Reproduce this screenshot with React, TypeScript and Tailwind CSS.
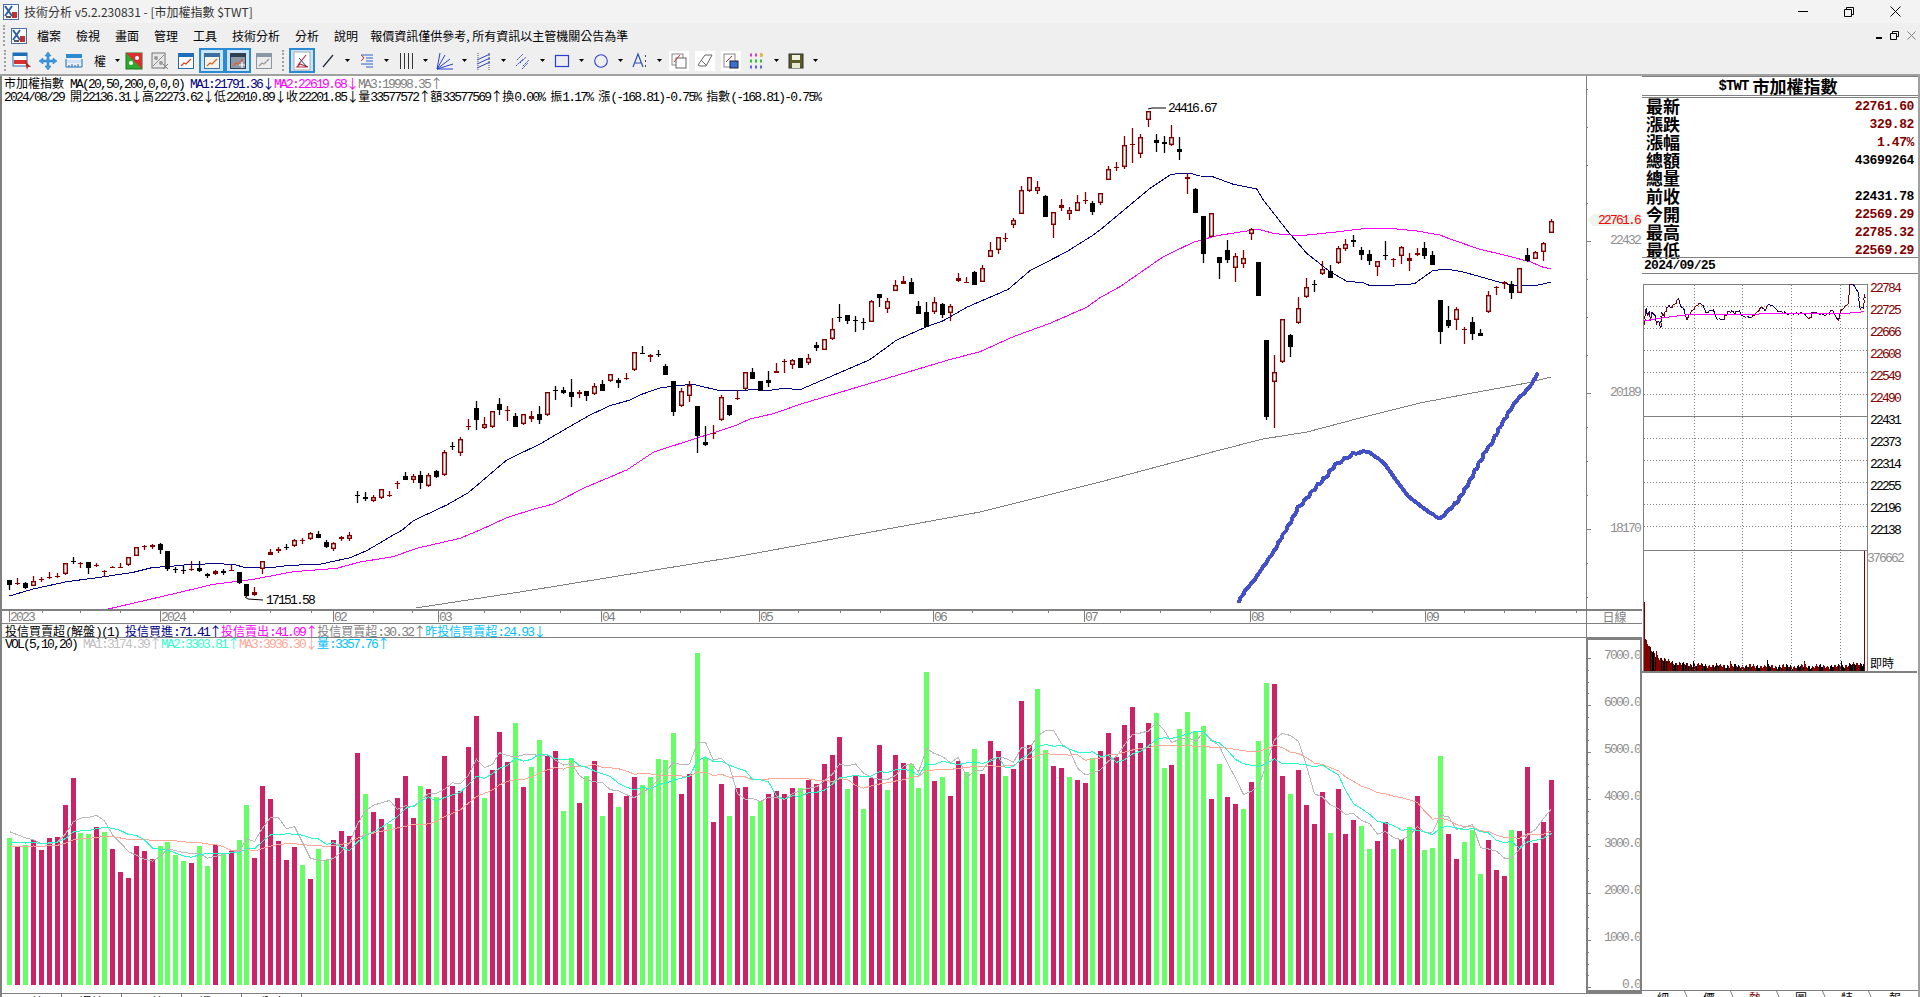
import React from "react";

const mono = "font-['Liberation_Mono','Noto_Sans_CJK_TC',monospace]";
const cjk = "font-['Noto_Sans_CJK_TC','Liberation_Sans',sans-serif]";
const num = "font-['Liberation_Mono','Noto_Sans_CJK_TC',monospace] text-[13px] tracking-[-1.8px]";

function Mix({ t, className = "" }: { t: string; className?: string }) {
  const parts = t.split(/([\u2E80-\u9FFF\uF900-\uFFEF]+|[↑↓])/).filter(Boolean);
  return (
    <span className={className}>
      {parts.map((p, i) =>
        p === "↑" || p === "↓" ? (
          <span key={i} className={`${cjk} inline-block w-[12px] text-center text-[13px] leading-[13px]`}>{p}</span>
        ) : /[\u2E80-\u9FFF\uF900-\uFFEF]/.test(p) ? (
          <span key={i} className={`${cjk} inline-block leading-[13px]`}>{p}</span>
        ) : (
          <span key={i} className={`${num} inline-block leading-[13px] whitespace-pre`}>{p}</span>
        )
      )}
    </span>
  );
}

type C = number[];
const segA: C[] = [[0,420,420,435,450],[1,414,430,432,436],[0,425,429,443,447],[1,408,423,437,437],[1,410,417,419,425],[1,397,410,412,418],[1,400,407,409,414],[1,368,370,403,404],[0,351,362,364,372],[1,365,370,372,383],[0,366,367,384,402],[1,370,375,377,382],[1,391,393,395,411],[1,378,381,383,385],[1,370,381,383,383],[1,352,352,376,378],[1,322,322,347,348],[1,316,318,320,331],[1,313,316,322,326],[0,310,312,329,342],[0,334,334,388,394],[0,380,388,390,399],[0,376,389,393,401],[1,364,387,391,392],[0,364,384,393,396],[0,400,403,407,413],[1,389,394,403,404],[0,388,393,399,406],[1,374,389,391,392],[0,396,396,428,433],[0,431,432,467,470],[1,442,457,466,467],[1,364,364,388,402],[1,327,337,345,346],[1,322,326,334,338],[0,313,321,323,331],[1,298,301,319,320],[1,294,301,303,312],[1,277,278,298,299],[0,273,283,293,293],[0,301,306,321,323],[1,307,308,327,333],[1,288,290,298,302],[1,277,284,296,303]];
const segB: C[] = [[0,513,526,529,548],[0,516,531,536,544],[1,525,532,544,545],[1,507,508,535,536],[1,513,524,527,530],[1,483,490,493,507],[0,456,468,479,480],[1,463,469,480,488],[0,453,465,488,507],[1,458,466,499,500],[0,450,453,470,473],[1,391,397,466,467],[0,365,377,380,390],[1,351,358,400,407],[1,297,318,321,329],[0,243,265,299,330],[1,292,313,323,326],[1,273,274,322,323],[0,234,252,269,285],[1,258,269,272,303],[0,280,289,320,320],[1,283,283,313,314],[1,273,287,296,305],[0,259,283,299,312],[1,216,217,286,287],[0,197,210,213,240],[0,201,210,218,221],[0,177,216,230,261],[1,209,217,223,233],[0,213,214,227,242],[1,190,199,223,224],[0,180,193,212,213],[1,163,163,184,185],[0,175,180,188,204],[1,158,175,177,180],[1,95,97,151,152],[0,78,99,101,101],[1,102,106,112,125],[0,90,102,106,112],[0,132,139,164,165],[0,183,183,275,288],[1,205,214,259,260],[1,183,195,229,245],[0,258,258,349,399],[0,318,366,374,378],[1,315,338,343,357],[1,226,232,301,302],[0,255,255,284,288],[1,210,234,237,239],[1,156,157,208,210],[0,144,156,176,177],[0,183,183,212,212],[0,153,180,188,200],[1,128,154,158,158],[1,116,124,127,158],[1,117,119,134,146],[0,115,115,143,144]];
const segC: C[] = [[1,762,775,790,795],[0,725,736,743,752],[1,716,718,749,751],[1,655,688,718,719],[0,612,651,654,666],[0,645,646,662,672],[0,648,659,661,696],[0,654,665,667,690],[1,601,604,665,666],[0,582,582,593,621],[1,595,604,626,639],[1,541,556,572,573],[1,529,544,551,551],[0,534,546,582,582],[0,603,618,642,642],[0,606,636,680,680],[1,591,606,636,642],[0,610,613,645,654],[1,613,619,638,663],[1,519,535,542,545],[1,531,545,548,548],[0,514,516,555,555],[1,495,504,545,545],[1,426,451,470,470],[1,411,412,449,462],[1,400,415,418,425],[1,354,360,374,384],[1,259,271,341,341],[1,231,232,272,275],[1,243,262,272,282],[0,286,288,351,351],[1,337,337,374,414],[1,297,316,323,333],[1,320,331,341,360],[1,285,307,332,332],[1,276,300,303,312],[0,303,309,335,345],[1,280,280,308,315],[1,197,208,239,239],[1,186,201,204,213],[1,108,136,200,208],[1,84,132,134,189],[1,102,112,161,174],[1,33,34,61,81],[0,101,121,128,156],[0,108,126,133,159],[1,75,112,134,137]];
const segD: C[] = [[0,141,178,185,209],[1,250,262,266,312],[0,295,297,368,369],[0,378,378,491,518],[1,370,370,440,441],[0,502,502,518,566],[0,450,480,510,518],[1,490,499,535,575],[1,480,505,523,533],[1,415,416,433,450],[0,516,516,618,618],[0,750,750,980,990],[1,795,847,877,1013],[1,686,688,817,818],[0,733,735,770,800],[1,622,653,700,701],[1,565,592,622,623],[0,571,582,584,606],[1,514,538,553,554],[0,525,544,563,564],[1,469,475,520,521],[1,447,463,476,482],[0,435,450,457,471],[0,472,480,494,510],[0,480,492,512,524],[1,514,514,531,557],[0,453,495,497,509],[1,505,507,509,530],[1,469,470,499,522],[1,489,505,514,542],[1,475,489,496,497],[0,456,475,497,507],[0,484,496,524,524],[0,630,630,725,761],[0,648,690,707,713],[1,652,658,691,720],[1,712,716,718,761],[0,682,696,732,749],[0,717,729,737,737],[1,603,616,667,668],[1,587,591,593,614],[1,574,575,583,597],[0,574,582,608,626],[1,534,535,608,610],[0,474,496,512,515],[1,484,487,508,508],[1,457,458,487,513],[1,388,392,428,428]];

const conv = (s: C[], oy: number) => s.map((r) => [r[0], oy + r[1] / 3, oy + r[2] / 3, oy + r[3] / 3, oy + r[4] / 3]);
const candles = [...conv(segA, 440), ...conv(segB, 320), ...conv(segC, 100), ...conv(segD, 90)];
const cx = (i: number) => Math.round(9.3 + 7.906 * i);

const pts = (ox: number, oy: number, a: number[][]) => a.map(([x, y]) => [ox + x / 3, oy + y / 3]);
const toS = (a: number[][]) => a.map((p) => `${p[0].toFixed(1)},${p[1].toFixed(1)}`).join(" ");

const densify = (a: number[][], step: number, amp: number) => {
  const out: number[][] = [];
  let n = 0;
  for (let i = 0; i < a.length - 1; i++) {
    const [x0, y0] = a[i];
    const [x1, y1] = a[i + 1];
    const len = Math.hypot(x1 - x0, y1 - y0);
    const k = Math.max(1, Math.round(len / step));
    for (let j = 0; j < k; j++) {
      const t = j / k;
      n++;
      const w = amp * (Math.sin(n * 1.9) + 0.6 * Math.sin(n * 4.3 + 1));
      out.push([x0 + (x1 - x0) * t + w * 0.6, y0 + (y1 - y0) * t + w]);
    }
  }
  out.push(a[a.length - 1]);
  return out;
};

const navy = toS([
  ...pts(0, 440, [[28,468],[100,447],[200,425],[300,412],[400,397],[460,382],[500,380],[560,374],[640,371],[700,373],[740,384],[820,382],[870,376],[960,373],[1050,353],[1100,332],[1180,285]]),
  ...pts(340, 320, [[187,630],[220,602],[320,555],[385,518],[430,480],[500,420],[600,372],[680,325],[750,285],[810,257],[870,240],[905,223],[960,204],[1000,198],[1060,193],[1130,210],[1190,212],[1240,209],[1290,211],[1330,205],[1380,209]]),
  ...pts(780, 100, [[268,780],[350,720],[440,680],[490,662],[560,622],[685,568],[750,512],[860,455],[940,405]]),
  ...pts(1100, 90, [[0,420],[60,370],[150,295],[210,255],[240,249],[270,250],[300,258],[335,259],[400,283],[470,297],[490,330],[560,420],[620,490],[690,545],[740,574],[790,578],[810,587],[920,584],[945,580],[1000,541],[1045,538],[1090,546],[1200,577],[1240,586],[1310,586],[1352,577]]),
]);
const magenta = toS([
  ...pts(0, 440, [[325,507],[450,478],[560,452],[640,433],[760,418],[880,395],[1010,385],[1080,366],[1180,350],[1250,325],[1380,295]]),
  ...pts(340, 320, [[420,630],[500,593],[580,568],[640,552],[730,505],[860,450],[940,397],[1000,377],[1100,345],[1190,315],[1230,297],[1300,281],[1380,253]]),
  ...pts(780, 100, [[505,780],[600,755],[700,710],[810,670],[920,622]]),
  ...pts(1100, 90, [[0,623],[60,590],[190,500],[280,457],[350,437],[440,423],[475,418],[525,431],[600,437],[700,427],[800,415],[870,415],[950,423],[1020,435],[1050,447],[1140,478],[1200,492],[1290,515],[1330,532],[1352,536]]),
]);
const grayLine = toS([[416,608],[520,592],[735,557],[980,512],[1100,482],[1220,450],[1263,439],[1307,432],[1360,418],[1420,403],[1467,394],[1527,383],[1551,377]]);
const blueCurve = toS(densify([[1239,601],[1245,591],[1250,585],[1255,579],[1261,570],[1270,557],[1276,548],[1280,540],[1289,525],[1298,508],[1307,498],[1316,487],[1326,477],[1335,465],[1345,459],[1353,454],[1367,451],[1376,457],[1384,463],[1396,480],[1408,496],[1417,503],[1426,510],[1440,519],[1449,510],[1457,502],[1466,488],[1475,471],[1482,458],[1486,450],[1490,446],[1495,437],[1500,427],[1506,417],[1512,407],[1517,400],[1522,395],[1528,389],[1533,382],[1537,374]], 3, 0.6));

type B = [number, number];
const vol1: B[] = [[0,594],[1,618],[0,615],[1,600],[1,630],[1,594],[1,591],[1,495],[1,414],[0,579],[0,582],[1,561],[0,576],[1,627],[1,696],[1,714],[1,618],[1,633],[1,657],[0,618],[0,606],[0,645],[0,663],[1,669],[0,618],[0,678],[1,615],[0,642],[1,633],[0,600],[0,495],[1,654],[1,438],[1,477],[1,603],[1,660],[1,621],[0,675],[1,717],[0,627],[0,660],[1,600],[1,573],[1,588],[1,339],[0,462],[1,516],[1,537],[0,552],[1,474],[1,408],[1,534],[0,438],[1,447],[0,471],[1,348],[1,438],[1,453],[1,321],[1,228],[0,474],[1,390],[1,276],[1,366],[0,249],[1,441],[0,381],[0,300],[1,348],[1,333],[0,513],[0,354],[1,489],[0,408],[1,363],[0,528],[1,459],[0,501],[1,468],[1,411],[0,435],[0,411],[0,357],[0,360],[0,279],[1,462],[1,402],[0,39],[0,354],[1,546],[1,432],[0,528],[1,444],[1,441],[0,528],[0,483],[1,462],[1,453]];
const vol2: B[] = [[1,462],[1,444],[0,444],[1,420],[1,432],[1,372],[1,345],[1,291],[0,447],[1,405],[0,507],[1,415],[1,315],[0,450],[1,345],[1,369],[0,372],[0,444],[0,96],[1,423],[0,411],[1,468],[1,363],[0,396],[0,327],[1,402],[1,303],[1,333],[0,408],[1,387],[1,183],[1,315],[0,147],[0,330],[1,378],[1,384],[0,411],[1,420],[1,429],[0,354],[1,333],[1,279],[1,351],[1,255],[1,201],[1,309],[1,249],[0,219],[0,384],[1,375],[0,267],[0,216],[0,273],[0,258],[1,477],[0,372],[1,471],[1,492],[0,507],[1,426],[0,303],[0,129],[1,132],[1,408],[0,462],[1,390],[1,495],[1,552],[1,456],[0,579],[1,447],[1,582],[1,540],[0,558],[0,627],[1,603],[1,546],[0,627],[1,597],[0,561],[1,468],[0,630],[0,624],[0,348],[1,582],[1,657],[0,606],[0,570],[0,702],[1,600],[1,690],[1,708],[0,570],[1,573],[1,381],[1,609],[1,546],[1,420]];
const vols = [...vol1, ...vol2].map(([k, z]) => [k, 640 + z / 3]);

const ma = (n: number, pad: number) => {
  const ys = vols.map((v) => v[1]);
  return toS(
    ys.map((_, i) => {
      let sum = 0;
      for (let j = i - n + 1; j <= i; j++) sum += j >= 0 ? ys[j] : pad;
      return [cx(i) + 0.5, sum / n];
    })
  );
};

const intraRaw = [[253,160],[258,110],[262,135],[268,120],[272,150],[276,125],[285,130],[290,160],[296,150],[302,172],[306,125],[312,135],[320,115],[325,103],[332,110],[345,100],[355,80],[362,105],[372,115],[380,148],[388,130],[398,118],[410,103],[420,97],[430,105],[438,125],[450,120],[460,115],[472,148],[482,142],[490,148],[500,128],[515,118],[525,128],[538,118],[545,135],[560,138],[575,140],[590,125],[605,108],[615,118],[625,100],[640,105],[655,122],[670,122],[680,128],[700,128],[730,127],[748,145],[760,122],[780,130],[800,132],[818,118],[835,150],[842,120],[865,97],[870,40],[880,40],[895,65],[900,115],[910,110],[915,68]];
const intra = densify(intraRaw.map(([x, y]) => [1560 + x / 3, 270 + y / 3]), 1.6, 0.7);
const avg = toS(pts(1560, 270, [[253,150],[280,145],[300,142],[350,135],[400,130],[500,130],[700,128],[850,128],[912,122]]));

const majorDates: [number, string][] = [[9,"2023"],[160,"2024"],[333,"02"],[438,"03"],[601,"04"],[759,"05"],[933,"06"],[1084,"07"],[1250,"08"],[1425,"09"]];
const minorDates = [42,80,120,193,230,270,311,373,412,484,520,560,640,680,720,798,840,880,972,1012,1048,1120,1160,1210,1290,1330,1372,1464,1504,1535,1576];

function Tb({ children, sel = false }: { children?: React.ReactNode; sel?: boolean }) {
  return (
    <div className={`w-[26px] h-[25px] shrink-0 flex items-center justify-center ${sel ? "bg-[#cce4f7] border-2 border-[#2a8ad4]" : ""}`}>
      {children}
    </div>
  );
}
function Dd() {
  return (
    <div className="w-[13px] h-[25px] shrink-0 flex items-center justify-center">
      <svg width="5" height="3" viewBox="0 0 5 3"><path d="M0 0h5L2.5 3z" fill="#000" /></svg>
    </div>
  );
}
function Grip({ w = "w-[12px]" }: { w?: string }) {
  return (
    <div className={`${w} h-[25px] shrink-0 flex justify-center items-center`}>
      <div className="w-px h-[21px] border-l-2 border-dotted border-[#a0a0a0]" />
    </div>
  );
}
const Win = ({ c = "#1f6fb8", line = "#d8402a", bg = "#fff", plus = false }: { c?: string; line?: string; bg?: string; plus?: boolean }) => (
  <svg width="18" height="18" viewBox="0 0 18 18">
    <rect x="1.5" y="1.5" width="15" height="15" fill={bg} stroke={c} />
    <rect x="2" y="2" width="14" height="3" fill={c} />
    <path d="M4 14l3-3 2 1 5-5" stroke={line} fill="none" strokeWidth="1.3" />
    {plus && <path d="M10 13h6M13 10v6" stroke="#fff" strokeWidth="1.2" />}
  </svg>
);
const Logo = () => (
  <svg width="16" height="16" viewBox="0 0 16 16">
    <rect x="0.5" y="0.5" width="15" height="15" fill="#fff" stroke="#4a6fa0" />
    <path d="M2 2l7 10M9 2L2 12" stroke="#2a5fb0" strokeWidth="2" />
    <path d="M9 8h5v6H9z" fill="#c03030" />
    <path d="M3 13h5" stroke="#222" strokeWidth="1.5" />
  </svg>
);

function Toolbar() {
  return (
    <div className="h-[27px] flex items-center pl-[1px] bg-[#efeff0] -mt-[1px]">
      <Grip w="w-[8px]" />
      <Tb>
        <svg width="20" height="20" viewBox="0 0 20 20"><rect x="1" y="2" width="14" height="13" fill="#fff" stroke="#1f6fb8" /><rect x="1" y="2" width="14" height="3" fill="#1f6fb8" /><rect x="2" y="9" width="13" height="4" fill="#d83030" /><path d="M13 10l6 6-3 0-1 3z" fill="#c02020" /></svg>
      </Tb>
      <Tb>
        <svg width="20" height="20" viewBox="0 0 20 20"><path d="M10 1l3 4h-2v4h4V7l4 3-4 3v-2h-4v4h2l-3 4-3-4h2v-4H5v2l-4-3 4-3v2h4V5H7z" fill="#3a9be0" stroke="#1f6fb8" strokeWidth=".5" /></svg>
      </Tb>
      <Tb>
        <svg width="18" height="18" viewBox="0 0 18 18"><rect x="1" y="2" width="16" height="4" fill="#2a8ad4" /><rect x="1" y="8" width="16" height="3" fill="#cfe5f7" /><path d="M1 7v8h16V7M4 13v2M7 12v3M10 13v2M13 12v3" stroke="#1f6fb8" fill="none" /></svg>
      </Tb>
      <Tb><span className={`${cjk} text-[12px] text-black`}>權</span></Tb>
      <div className="w-[8px] h-[25px] shrink-0 flex items-center justify-center"><svg width="5" height="3" viewBox="0 0 5 3"><path d="M0 0h5L2.5 3z" fill="#000" /></svg></div>
      <Tb>
        <svg width="18" height="18" viewBox="0 0 18 18"><rect x="1" y="1" width="16" height="16" fill="#2fa82f" stroke="#1b7a1b" /><path d="M1 1l16 16V1z" fill="#d83030" /><circle cx="6" cy="11" r="2" fill="#fff" /><circle cx="12" cy="6" r="2" fill="#fff" /></svg>
      </Tb>
      <Tb>
        <svg width="18" height="18" viewBox="0 0 18 18"><rect x="1" y="1" width="13" height="15" fill="#e8e8e8" stroke="#777" /><path d="M2 14L13 3" stroke="#888" /><circle cx="5" cy="6" r="2" fill="#999" /><circle cx="10" cy="11" r="2" fill="#999" /><path d="M12 12l5 5M17 12l-5 5" stroke="#777" /></svg>
      </Tb>
      <Tb><Win /></Tb>
      <Tb sel><Win c="#3a6f9f" line="#e06030" bg="#f4f4e8" /></Tb>
      <Tb sel><Win c="#304050" line="#e06030" bg="#8a98a8" plus /></Tb>
      <Tb><Win c="#8a97a5" line="#999" bg="#ececec" /></Tb>
      <Grip />
      <Tb sel>
        <svg width="18" height="20" viewBox="0 0 18 20"><rect x="1" y="1" width="16" height="18" fill="#fff" stroke="#aaa" /><path d="M5 14L13 4M4 16l3-3 8 3z" fill="none" stroke="#b03040" strokeWidth="1.2" /><path d="M6 7l8 9" stroke="#304080" /></svg>
      </Tb>
      <Tb><svg width="16" height="16" viewBox="0 0 16 16"><path d="M3 14L13 2" stroke="#202840" strokeWidth="1.2" /></svg></Tb><Dd />
      <Tb><svg width="18" height="18" viewBox="0 0 18 18"><path d="M3 3h12M8 6h7M8 9h7M3 12h12M8 15h7" stroke="#2a5fd0" /><path d="M3 3l3 3-3 3" stroke="#d03030" fill="none" /></svg></Tb><Dd />
      <Tb><svg width="16" height="18" viewBox="0 0 16 18"><path d="M2.5 1v16M6.5 1v16M10.5 1v16M14.5 1v16" stroke="#333" /></svg></Tb><Dd />
      <Tb><svg width="18" height="18" viewBox="0 0 18 18"><path d="M1 17L4 1M1 17L9 3M1 17L14 7M1 17L17 12M1 17h16" stroke="#2a40d0" fill="none" /></svg></Tb><Dd />
      <Tb><svg width="18" height="18" viewBox="0 0 18 18"><path d="M2 8L15 2M2 12l13-6M2 16l13-6" stroke="#2a40d0" fill="none" /><path d="M3 1v17M14 1v17" stroke="#555" strokeDasharray="1 1" /></svg></Tb><Dd />
      <Tb><svg width="18" height="18" viewBox="0 0 18 18"><path d="M3 8l6-6M6 11l6-6M2 14l7-7M9 14l6-6M8 17l6-6" stroke="#2a40d0" fill="none" strokeDasharray="2 1" /></svg></Tb><Dd />
      <Tb><svg width="16" height="16" viewBox="0 0 16 16"><rect x="1.5" y="2.5" width="13" height="11" fill="none" stroke="#2a40d0" strokeWidth="1.2" /></svg></Tb><Dd />
      <Tb><svg width="16" height="16" viewBox="0 0 16 16"><circle cx="8" cy="8" r="6.3" fill="none" stroke="#2a40d0" strokeWidth="1.1" /></svg></Tb><Dd />
      <Tb><svg width="16" height="18" viewBox="0 0 16 18"><path d="M1 15L6 2l5 13M3 11h6" stroke="#3050b0" fill="none" strokeWidth="1.2" /><path d="M13.5 3v2M13.5 8v2M13.5 13v2" stroke="#444" /></svg></Tb><Dd />
      <Tb><div className="w-[20px] h-[20px] bg-white flex items-center justify-center"><svg width="16" height="16" viewBox="0 0 16 16"><rect x="1" y="1" width="11" height="11" fill="#fff" stroke="#888" /><rect x="5" y="5" width="10" height="10" fill="#fff" stroke="#666" /><path d="M3 9l6-7" stroke="#d03030" /></svg></div></Tb>
      <Tb><div className="w-[20px] h-[20px] bg-white flex items-center justify-center"><svg width="16" height="16" viewBox="0 0 16 16"><path d="M1 12L8 2h7l-6 11H3z" fill="#fff" stroke="#666" /><path d="M4 7l5 5" stroke="#666" /></svg></div></Tb>
      <Tb><div className="w-[20px] h-[20px] bg-white flex items-center justify-center"><svg width="16" height="16" viewBox="0 0 16 16"><rect x="1" y="1" width="11" height="13" fill="#fff" stroke="#888" /><path d="M3 9l6-6" stroke="#d03030" /><rect x="7" y="8" width="8" height="7" fill="#3a6fd0" stroke="#223" /></svg></div></Tb>
      <Tb><svg width="16" height="16" viewBox="0 0 16 16"><path d="M1 2h3M6 2h3M11 2h3" stroke="#d040c0" strokeWidth="3" strokeDasharray="2 1" /><path d="M1 8h3M6 8h3M11 8h3" stroke="#30c030" strokeWidth="3" strokeDasharray="2 1" /><path d="M1 14h3M6 14h3M11 14h3" stroke="#6060e0" strokeWidth="3" strokeDasharray="2 1" /><rect x="11" y="0.5" width="3" height="3" fill="#e0c030" /></svg></Tb><Dd />
      <Tb><svg width="16" height="16" viewBox="0 0 16 16"><rect x="1" y="1" width="14" height="14" fill="#5a5a2a" stroke="#333" /><rect x="4" y="2" width="8" height="5" fill="#f0f0e0" /><rect x="4" y="10" width="8" height="5" fill="#e8e8d0" /></svg></Tb><Dd />
    </div>
  );
}

function MainChart() {
  return (
    <svg width="1584" height="533" viewBox="2 76 1584 533" className="block">
      <g shapeRendering="crispEdges">
        <polyline points={grayLine} fill="none" stroke="#808080" strokeWidth="1" />
        <polyline points={magenta} fill="none" stroke="#ff00ff" strokeWidth="1" />
        <polyline points={navy} fill="none" stroke="#000080" strokeWidth="1" />
      </g>
      {candles.map((c, i) => {
        const x = cx(i);
        const col = c[0] === 0 ? "#000000" : "#800000";
        const t = Math.round(c[2]);
        const b = Math.round(c[3]);
        const h = b - t;
        return (
          <g key={i}>
            <rect x={x - 0.15} y={Math.round(c[1])} width="1.3" height={Math.max(1, Math.round(c[4]) - Math.round(c[1]))} fill={col} />
            {c[0] === 0 || h < 4 ? (
              <rect x={x - 2} y={t} width="5" height={Math.max(1, h)} fill={col} />
            ) : (
              <rect x={x - 1.3} y={t + 0.7} width="3.6" height={h - 1.4} fill="#fff" stroke={col} strokeWidth="1.4" />
            )}
          </g>
        );
      })}
      <polyline points="1148,109 1152,108 1166,108" fill="none" stroke="#000" />
      <polyline points="245,597 248,599 263,600" fill="none" stroke="#000" />
      <text x="1168" y="112" className={num} fill="#000">24416.67</text>
      <text x="266" y="604" className={num} fill="#000">17151.58</text>
      <polyline points={blueCurve} fill="none" stroke="#4350c8" strokeWidth="4" strokeLinejoin="round" strokeLinecap="round" shapeRendering="crispEdges" />
    </svg>
  );
}

function MainAxis() {
  const maj = [[241, "22432"], [393, "20189"], [529, "18170"]] as [number, string][];
  const min = [89, 127, 165, 203, 279, 317, 355, 427, 461, 495, 563, 597];
  return (
    <svg width="55" height="533" viewBox="1587 76 55 533" className="block">
      {min.map((y) => <rect key={y} x="1587" y={y} width="1" height="1" fill="#808080" />)}
      {maj.map(([y, t]) => (
        <g key={y}>
          <rect x="1587" y={y} width="4" height="1" fill="#808080" />
          <text x="1640" y={y + 3} textAnchor="end" className={num} fill="#909090">{t}</text>
        </g>
      ))}
      <polygon points="1587,220 1593,214 1641,214 1641,226 1593,226" fill="#eef5ee" />
      <text x="1640" y="224" textAnchor="end" className={num} fill="#ff0000">22761.6</text>
    </svg>
  );
}

function VolChart() {
  return (
    <svg width="1584" height="355" viewBox="2 638 1584 355" className="block">
      <g shapeRendering="crispEdges">
        {vols.map((v, i) => (
          <rect key={i} x={cx(i) - 2} y={Math.round(v[1])} width="5" height={985 - Math.round(v[1])} fill={v[0] === 1 ? "#cc2266" : "#66ff66"} />
        ))}
        <polyline points={ma(20, 847)} fill="none" stroke="#ffa898" strokeWidth="1" />
        <polyline points={ma(5, 830)} fill="none" stroke="#b8b8b8" strokeWidth="1" />
        <polyline points={ma(10, 843)} fill="none" stroke="#22ffcc" strokeWidth="1" />
      </g>
    </svg>
  );
}

function VolAxis() {
  const labels: [number, string][] = [[656,"7000.0"],[703,"6000.0"],[750,"5000.0"],[797,"4000.0"],[844,"3000.0"],[891,"2000.0"],[938,"1000.0"],[985,"0.0"]];
  const minor: number[] = [];
  labels.forEach(([y]) => { if (y < 985) { minor.push(y + 12, y + 24, y + 35); } });
  return (
    <svg width="52" height="354" viewBox="1588 638 52 354" className="block">
      {minor.map((y) => <rect key={y} x="1588" y={y} width="1" height="1" fill="#808080" />)}
      {labels.map(([y, t]) => (
        <g key={y}>
          <rect x="1588" y={y} width="3" height="1" fill="#808080" />
          <text x="1640" y={y + 1} textAnchor="end" className={num} fill="#909090">{t}</text>
        </g>
      ))}
    </svg>
  );
}

function DateAxis() {
  return (
    <svg width="1584" height="12" viewBox="2 611 1584 12" className="block">
      {minorDates.map((x) => <rect key={x} x={x} y="611" width="1" height="2" fill="#808080" />)}
      {majorDates.map(([x, t]) => (
        <g key={x}>
          <rect x={x} y="611" width="1" height="11" fill="#808080" />
          <text x={x + 1} y="620.5" className={num} fill="#808080">{t}</text>
        </g>
      ))}
    </svg>
  );
}

function IntraChart() {
  const bars = Array.from({ length: 220 }, (_, i) => {
    const decay = 22 * Math.exp(-i / 10) + 5 * Math.exp(-i / 40);
    const rise = i > 190 ? (i - 190) * 0.12 : 0;
    const n = (Math.sin(i * 1.7) + 1) * 1.6 + (Math.sin(i * 0.37) + 1) * 0.9;
    const h = 2 + decay + rise + n + (i % 37 === 11 ? 5 : 0);
    return { x: 1645 + i, h: Math.round(h), red: Math.sin(i * 2.3) + Math.sin(i * 0.6) > -0.2 };
  });
  const prices: [number, string, string][] = [[287,"22784","#800000"],[309,"22725","#800000"],[331,"22666","#800000"],[353,"22608","#800000"],[375,"22549","#800000"],[397,"22490","#800000"],[419,"22431","#000000"],[441,"22373","#000000"],[463,"22314","#000000"],[485,"22255","#000000"],[507,"22196","#000000"],[529,"22138","#000000"]];
  const grid = [305, 327, 349, 371, 393, 437, 459, 481, 503, 525];
  return (
    <svg width="275" height="400" viewBox="1642 273 275 400" className="block">
      <g shapeRendering="crispEdges">
        <rect x="1644" y="601" width="1" height="69" fill="#800000" />
        {bars.map((b) => (
          <rect key={b.x} x={b.x} y={670 - b.h} width="1" height={b.h} fill={b.red ? "#800000" : "#000000"} />
        ))}
        <rect x="1864" y="550" width="1" height="120" fill="#800000" />
        {grid.map((y) => <line key={y} x1="1644" x2="1867" y1={y + 0.5} y2={y + 0.5} stroke="#808080" strokeDasharray="1 2" />)}
        {[1694, 1742, 1791, 1840].map((x) => <line key={x} x1={x + 0.5} x2={x + 0.5} y1="284" y2="670" stroke="#808080" strokeDasharray="1 2" />)}
        <rect x="1643" y="283" width="224" height="1" fill="#808080" />
        <rect x="1643" y="415" width="224" height="1" fill="#808080" />
        <rect x="1643" y="549" width="224" height="1" fill="#808080" />
        <rect x="1643" y="283" width="1" height="388" fill="#808080" />
        <rect x="1867" y="283" width="1" height="388" fill="#808080" />
        <rect x="1642" y="670" width="275" height="2" fill="#808080" />
        {intra.slice(1).map((p, i) => {
          const q = intra[i];
          return <line key={i} x1={q[0]} y1={q[1]} x2={p[0]} y2={p[1]} stroke={p[1] > q[1] ? "#000080" : "#800000"} strokeWidth="1" />;
        })}
        <polyline points={avg} fill="none" stroke="#ff00ff" strokeWidth="1" />
      </g>
      {prices.map(([y, t, c]) => (
        <text key={y} x="1870" y={y + 4} className={num} fill={c}>{t}</text>
      ))}
      <text x="1867" y="561" className={num} fill="#909090">376662</text>
      <text x="1870" y="667" className={`${cjk} text-[12px]`} fill="#000">即時</text>
    </svg>
  );
}

const quote: [string, string, string][] = [
  ["最新", "22761.60", "text-[#800000]"],
  ["漲跌", "329.82", "text-[#800000]"],
  ["漲幅", "1.47%", "text-[#800000]"],
  ["總額", "43699264", "text-black"],
  ["總量", "", "text-black"],
  ["前收", "22431.78", "text-black"],
  ["今開", "22569.29", "text-[#800000]"],
  ["最高", "22785.32", "text-[#800000]"],
  ["最低", "22569.29", "text-[#800000]"],
];

function RightPanel() {
  return (
    <div className="flex-1 flex flex-col h-full border-r-2 border-[#a0a0a0] bg-white">
      <div className="h-[20px] border-y border-[#808080] flex items-center justify-center text-black">
        <span className={`${mono} text-[14px] font-bold tracking-[-0.9px] whitespace-pre mr-[4px] -ml-[4px]`}>$TWT</span>
        <span className={`${cjk} text-[17px] leading-[18px] font-semibold`}>市加權指數</span>
      </div>
      <div className="h-[161px] border-t border-[#808080] mt-px pl-[4px] pr-[4px]">
        {quote.map(([k, v, c]) => (
          <div key={k} className="h-[18px] flex items-center justify-between">
            <span className={`${cjk} text-[17px] leading-[18px] font-semibold text-black mb-[3px]`}>{k}</span>
            <span className={`${mono} text-[13px] leading-[18px] font-bold tracking-[-0.4px] mb-[1px] ${c}`}>{v}</span>
          </div>
        ))}
      </div>
      <div className="h-[15px] border-y border-[#808080] box-content -mt-[1px]">
        <div className={`${mono} text-[13px] leading-[15px] font-bold tracking-[-0.7px] pl-[2px] text-black`}>2024/09/25</div>
      </div>
      <IntraChart />
      <div className="flex-1" />
      <div className="h-[7px] border-t border-[#808080] flex overflow-hidden">
        {["細", "價", "勢", "圖", "特", "報"].map((t, i) => (
          <div key={t} className={`w-[46px] flex ${i === 2 ? "text-[#800000] border-t border-dashed border-[#808080] -mt-px" : "text-black"}`}>
            <div className={`flex-1 text-center text-[12px] leading-[14px] ${cjk}`}>{t}</div>
            {i < 5 && <svg width="4" height="7" viewBox="0 0 4 7" className="shrink-0"><path d="M0.5 0l3 7" stroke="#808080" fill="none" /></svg>}
          </div>
        ))}
      </div>
    </div>
  );
}

export default function App() {
  return (
    <div className={`w-[1920px] h-[997px] flex flex-col overflow-hidden bg-[#efeff0] ${cjk}`}>
      <div className="h-[23px] bg-[#f3f3f3] flex items-center">
        <div className="w-[24px] pl-[3px]"><Logo /></div>
        <span className="text-[12px] text-[#333]">技術分析 v5.2.230831 - [市加權指數 $TWT]</span>
        <div className="ml-auto flex items-center">
          <div className="w-[46px] h-[20px] flex items-center justify-center"><div className="w-[10px] h-px bg-black" /></div>
          <div className="w-[46px] h-[20px] flex items-center justify-center">
            <svg width="10" height="10" viewBox="0 0 10 10"><path d="M2.5 2.5V.5h7v7h-2M.5 2.5h7v7h-7z" fill="none" stroke="#000" /></svg>
          </div>
          <div className="w-[46px] h-[20px] flex items-center justify-center">
            <svg width="11" height="11" viewBox="0 0 11 11"><path d="M.5.5l10 10M10.5.5l-10 10" stroke="#000" /></svg>
          </div>
          <div className="w-[2px]" />
        </div>
      </div>
      <div className="h-[25px] flex items-center text-[12px] text-black">
        <Grip w="w-[8px]" />
        <div className="w-[21px] flex justify-center"><Logo /></div>
        <div className="flex items-center pl-[8px] gap-[15px]">
          <span>檔案</span><span>檢視</span><span>畫面</span><span>管理</span><span>工具</span><span>技術分析</span><span>分析</span><span>說明</span>
          <span className="-ml-[3px]">報價資訊僅供參考, 所有資訊以主管機關公告為準</span>
        </div>
        <div className="ml-auto flex items-center gap-[8px] pr-[4px]">
          <div className="w-[6px] h-[2px] bg-black mt-[4px]" />
          <svg width="9" height="9" viewBox="0 0 9 9"><path d="M2.5 2.5V.5h6v5h-2M.5 2.5h6v6h-6z" fill="none" stroke="#000" /></svg>
          <svg width="9" height="9" viewBox="0 0 9 9"><path d="M.5.5l8 8M8.5.5l-8 8" stroke="#808080" /></svg>
        </div>
      </div>
      <Toolbar />
      <div className="h-[923px] flex bg-white border-t-2 border-[#a0a0a0]">
        <div className="w-[1642px] h-full flex flex-col border-l-2 border-[#808080]">
          <div className="h-[533px] flex relative">
            <div className="w-[1584px] relative">
              <MainChart />
              <div className="absolute left-[2px] top-0 text-[12px] leading-[13px] text-black whitespace-pre">
                <div className="h-[13px]">
                  <Mix t="市加權指數 MA(20,50,200,0,0,0) " />
                  <Mix t="MA1:21791.36↓" className="text-[#000080]" />
                  <Mix t="MA2:22619.68↓" className="text-[#ff00ff]" />
                  <Mix t="MA3:19998.35↑" className="text-[#808080]" />
                </div>
                <div className="h-[13px]">
                  <Mix t="2024/08/29 開22136.31↓高22273.62↓低22010.89↓收22201.85↓量33577572↑額33577569↑換0.00% 振1.17% 漲(-168.81)-0.75% 指數(-168.81)-0.75%" />
                </div>
              </div>
            </div>
            <div className="flex-1 border-l border-[#808080]"><MainAxis /></div>
          </div>
          <div className="h-[14px] flex border-t-2 border-[#808080]">
            <div className="w-[1584px] h-[12px]"><DateAxis /></div>
            <div className="flex-1 border-l border-[#808080] flex items-center justify-center text-[12px] leading-[12px] text-[#808080]">日線</div>
          </div>
          <div className="h-[14px] flex border-t border-[#808080]">
            <div className="w-[1584px] text-[12px] leading-[12px] text-black whitespace-pre pl-[3px]">
              <Mix t="投信買賣超(解盤)(1) " />
              <Mix t="投信買進:71.41↑" className="text-[#000080]" />
              <Mix t="投信賣出:41.09↑" className="text-[#ff00ff]" />
              <Mix t="投信買賣超:30.32↑" className="text-[#808080]" />
              <Mix t="昨投信買賣超:24.93↓" className="text-[#00bfff]" />
            </div>
            <div className="flex-1 border-l border-[#808080]" />
          </div>
          <div className="h-[356px] flex border-t border-[#808080]">
            <div className="w-[1584px] relative">
              <VolChart />
              <div className="absolute left-[3px] -top-[2px] text-[12px] leading-[13px] whitespace-pre text-black">
                <Mix t="VOL(5,10,20) " />
                <Mix t="MA1:3174.39↑" className="text-[#c0c0c0]" />
                <Mix t="MA2:3303.81↑" className="text-[#33ffcc]" />
                <Mix t="MA3:3936.30↓" className="text-[#ffa898]" />
                <Mix t="量:3357.76↑" className="text-[#00bfff]" />
              </div>
            </div>
            <div className="flex-1 border-2 border-[#808080] border-b-[3px]"><VolAxis /></div>
          </div>
          <div className="flex-1 flex border-t border-[#808080] overflow-hidden">
            {["日線", "週線", "月線", "還原", "分時"].map((t) => (
              <div key={t} className="w-[60px] border-r border-[#808080] text-center text-[12px] leading-[14px] pt-[1px] text-black">{t}</div>
            ))}
          </div>
        </div>
        <RightPanel />
      </div>
    </div>
  );
}
